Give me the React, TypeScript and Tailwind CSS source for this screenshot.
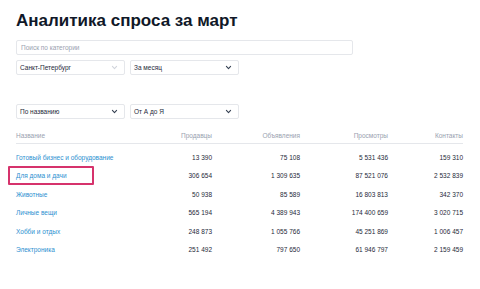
import React from 'react';

const rows = [
  { name: 'Готовый бизнес и оборудование', sales: '13 390', ads: '75 108', views: '5 531 436', contacts: '159 310' },
  { name: 'Для дома и дачи', sales: '306 654', ads: '1 309 635', views: '87 521 076', contacts: '2 532 839', marked: true },
  { name: 'Животные', sales: '50 938', ads: '85 589', views: '16 803 813', contacts: '342 370' },
  { name: 'Личные вещи', sales: '565 194', ads: '4 389 943', views: '174 400 659', contacts: '3 020 715' },
  { name: 'Хобби и отдых', sales: '248 873', ads: '1 055 766', views: '45 251 869', contacts: '1 006 457' },
  { name: 'Электроника', sales: '251 492', ads: '797 650', views: '61 946 797', contacts: '2 159 459' },
];

const Chevron: React.FC<{ light?: boolean }> = ({ light }) => (
  <svg className={light ? 'w-[7px] h-[7px] text-gray-300' : 'w-[7px] h-[7px] text-gray-700'} viewBox="0 0 10 10" fill="none" stroke="currentColor">
    <path d="M2 3.5l3 3 3-3" strokeWidth={1.6} strokeLinecap="round" strokeLinejoin="round" />
  </svg>
);

const Select: React.FC<{ label: string; light?: boolean }> = ({ label, light }) => (
  <div className="w-[109px] h-[15px] border border-gray-200 rounded-[2px] flex items-center justify-between pl-[3px] pr-[6px] text-[6.5px] text-gray-800">
    <span>{label}</span>
    <Chevron light={light} />
  </div>
);

const App: React.FC = () => {
  return (
    <div className="w-[480px] h-[289px] bg-white px-[16px] pt-[11px] overflow-hidden" style={{ fontFamily: '"Liberation Sans", Arial, sans-serif' }}>
      <h1 className="text-[17px] font-bold text-gray-900 leading-[20px]">Аналитика спроса за март</h1>

      {/* Filters */}
      <div className="mt-[9px] w-[337px] h-[15px] border border-gray-200 rounded-[2px] flex items-center pl-[4px] text-[6.5px] text-gray-400">
        Поиск по категории
      </div>
      <div className="mt-[5px] flex gap-[5px]">
        <Select label="Санкт-Петербург" light />
        <Select label="За месяц" />
      </div>
      <div className="mt-[29px] flex gap-[5px]">
        <Select label="По названию" />
        <Select label="От А до Я" />
      </div>

      {/* Table */}
      <div className="mt-[9px] w-[447px] text-[6.5px]">
        <div className="flex items-center h-[16px] border-b border-gray-200 text-gray-400">
          <div className="flex-1">Название</div>
          <div className="w-[60px] text-right">Продавцы</div>
          <div className="w-[88px] text-right">Объявления</div>
          <div className="w-[88px] text-right">Просмотры</div>
          <div className="w-[75px] text-right">Контакты</div>
        </div>
        <div className="pt-[4.5px]">
          {rows.map((r) => (
            <div key={r.name} className="flex items-center h-[18.5px] text-gray-800">
              <div className="flex-1">
                <span
                  className={
                    r.marked
                      ? 'relative text-[#2b8fd0] before:content-[""] before:absolute before:left-[-8px] before:right-[-27px] before:top-[-6px] before:bottom-[-6px] before:border-2 before:border-[#d6336c] before:rounded-[1px]'
                      : 'text-[#2b8fd0]'
                  }
                >
                  {r.name}
                </span>
              </div>
              <div className="w-[60px] text-right">{r.sales}</div>
              <div className="w-[88px] text-right">{r.ads}</div>
              <div className="w-[88px] text-right">{r.views}</div>
              <div className="w-[75px] text-right">{r.contacts}</div>
            </div>
          ))}
        </div>
      </div>
    </div>
  );
};

export default App;
